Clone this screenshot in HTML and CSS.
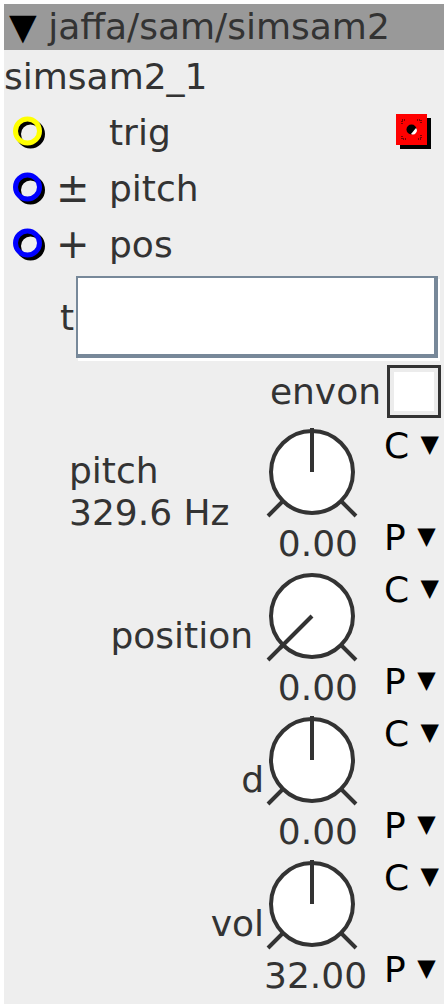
FILE: index.html
```html
<!DOCTYPE html>
<html>
<head>
<meta charset="utf-8">
<link rel="stylesheet" href="styles.css">
</head>
<body>
<div class="panel">
  <div class="header"><span class="tri">▼</span> jaffa/sam/simsam2</div>
  <div class="title">simsam2_1</div>

  <div class="port">
    <svg class="jack" width="38" height="36" viewBox="0 0 38 36"><circle cx="18.5" cy="20" r="12" fill="none" stroke="#000" stroke-width="5"/><circle cx="15.5" cy="17" r="12" fill="none" stroke="#ffff00" stroke-width="5"/></svg>
    <span class="sign"></span>
    <span class="plabel">trig</span>
    <svg class="trigbox" width="36" height="36" viewBox="0 0 36 36">
      <rect x="4" y="4" width="31" height="31" fill="#000"/>
      <rect x="0" y="0" width="31" height="31" fill="#ff0000"/>
      <g stroke="#000" stroke-width="1" stroke-dasharray="1 1" fill="none">
        <path d="M6 10 V6 H10"/><path d="M21 6 H25 V10"/><path d="M25 21 V25 H21"/><path d="M10 25 H6 V21"/>
      </g>
      <circle cx="15.5" cy="15.5" r="5" fill="#000"/>
      <path d="M15 20 A4 4 0 0 0 20 14 Z" fill="#fff"/>
    </svg>
  </div>
  <div class="port">
    <svg class="jack" width="38" height="36" viewBox="0 0 38 36"><circle cx="18.5" cy="20" r="12" fill="none" stroke="#000" stroke-width="5"/><circle cx="15.5" cy="17" r="12" fill="none" stroke="#0000ff" stroke-width="5"/></svg>
    <span class="sign">±</span>
    <span class="plabel">pitch</span>
  </div>
  <div class="port">
    <svg class="jack" width="38" height="36" viewBox="0 0 38 36"><circle cx="18.5" cy="20" r="12" fill="none" stroke="#000" stroke-width="5"/><circle cx="15.5" cy="17" r="12" fill="none" stroke="#0000ff" stroke-width="5"/></svg>
    <span class="sign">+</span>
    <span class="plabel">pos</span>
  </div>

  <div class="text-row">
    <span class="tlabel">t</span>
    <div class="textbox"></div>
  </div>

  <div class="check-row">
    <span class="clabel">envon</span>
    <div class="checkbox"><div class="checkbox-inner"></div></div>
  </div>

  <div class="knob-row">
    <div class="klabel klabel-left">pitch<br>329.6 Hz</div>
    <div class="knob">
      <svg width="96" height="104" viewBox="0 0 96 104">
        <circle cx="48" cy="52" r="41" fill="#fff" stroke="#333" stroke-width="4"/>
        <path d="M19 81 L4 96 M77 81 L92 96" stroke="#333" stroke-width="4" fill="none"/>
        <path d="M48 52 V8" stroke="#333" stroke-width="4"/>
      </svg>
      <div class="kvalue">0.00</div>
    </div>
    <div class="cp"><div>C <span class="dd">▼</span></div><div>P <span class="dd">▼</span></div></div>
  </div>

  <div class="knob-row">
    <div class="klabel klabel-pos">position</div>
    <div class="knob">
      <svg width="96" height="104" viewBox="0 0 96 104">
        <circle cx="48" cy="52" r="41" fill="#fff" stroke="#333" stroke-width="4"/>
        <path d="M19 81 L4 96 M77 81 L92 96" stroke="#333" stroke-width="4" fill="none"/>
        <path d="M48 52 L16 84" stroke="#333" stroke-width="4"/>
      </svg>
      <div class="kvalue">0.00</div>
    </div>
    <div class="cp"><div>C <span class="dd">▼</span></div><div>P <span class="dd">▼</span></div></div>
  </div>

  <div class="knob-row">
    <div class="klabel">d</div>
    <div class="knob">
      <svg width="96" height="104" viewBox="0 0 96 104">
        <circle cx="48" cy="52" r="41" fill="#fff" stroke="#333" stroke-width="4"/>
        <path d="M19 81 L4 96 M77 81 L92 96" stroke="#333" stroke-width="4" fill="none"/>
        <path d="M48 52 V8" stroke="#333" stroke-width="4"/>
      </svg>
      <div class="kvalue">0.00</div>
    </div>
    <div class="cp"><div>C <span class="dd">▼</span></div><div>P <span class="dd">▼</span></div></div>
  </div>

  <div class="knob-row">
    <div class="klabel">vol</div>
    <div class="knob">
      <svg width="96" height="104" viewBox="0 0 96 104">
        <circle cx="48" cy="52" r="41" fill="#fff" stroke="#333" stroke-width="4"/>
        <path d="M19 81 L4 96 M77 81 L92 96" stroke="#333" stroke-width="4" fill="none"/>
        <path d="M48 52 V8" stroke="#333" stroke-width="4"/>
      </svg>
      <div class="kvalue">32.00</div>
    </div>
    <div class="cp"><div>C <span class="dd">▼</span></div><div>P <span class="dd">▼</span></div></div>
  </div>
</div>
</body>
</html>
```

FILE: styles.css
```css
html, body {
  margin: 0;
  padding: 0;
  background: #ffffff;
}
body {
  padding: 4px;
  font-family: "DejaVu Sans", sans-serif;
  font-size: 36px;
  color: #333333;
}
.panel {
  width: 440px;
  background: #eeeeee;
  min-height: 1000px;
}
.header {
  height: 46px;
  line-height: 46px;
  background: #999999;
  padding-left: 5px;
  white-space: nowrap;
  color: #333;
}
.tri {
  color: #000;
}
.title {
  height: 54px;
  line-height: 54px;
}
.port {
  display: flex;
  align-items: center;
  height: 56px;
  padding-left: 8px;
}
.jack {
  flex: none;
}
.sign {
  width: 59px;
  padding-left: 6px;
  box-sizing: border-box;
  flex: none;
  font-size: 40px;
  line-height: 40px;
}
.plabel {
  flex: 1;
}
.trigbox {
  margin-right: 12px;
  flex: none;
}
.text-row {
  display: flex;
  align-items: center;
  padding: 4px 0 4px 56px;
}
.tlabel {
  width: 16px;
}
.textbox {
  width: 356px;
  height: 76px;
  background: #fff;
  border-style: solid;
  border-color: #778899;
  border-width: 2px 4px 4px 2px;
  box-shadow: 2px 3px 0 #ffffff;
}
.check-row {
  display: flex;
  align-items: center;
  justify-content: flex-end;
  height: 58px;
  padding-right: 3px;
}
.clabel {
  margin-right: 6px;
}
.checkbox {
  border: 3px solid #333;
  background: #ececec;
  padding: 4px;
  width: 40px;
  height: 39px;
}
.checkbox-inner {
  width: 100%;
  height: 100%;
  background: #fff;
}
.knob-row {
  display: grid;
  grid-template-columns: 1fr 96px 84px;
  height: 144px;
}
.klabel {
  display: flex;
  align-items: center;
  justify-content: flex-end;
  line-height: 42px;
}
.klabel-left {
  justify-content: flex-start;
  padding-left: 65px;
}
.klabel-pos {
  padding-right: 11px;
}
.knob svg {
  display: block;
}
.kvalue {
  text-align: right;
  line-height: 40px;
  padding-right: 2px;
  white-space: nowrap;
}
.cp {
  display: flex;
  flex-direction: column;
  justify-content: space-between;
  padding: 4px 0 6px 24px;
  color: #000;
  line-height: 40px;
  white-space: nowrap;
}
.dd {
  font-size: 24px;
  vertical-align: 6px;
}
```
